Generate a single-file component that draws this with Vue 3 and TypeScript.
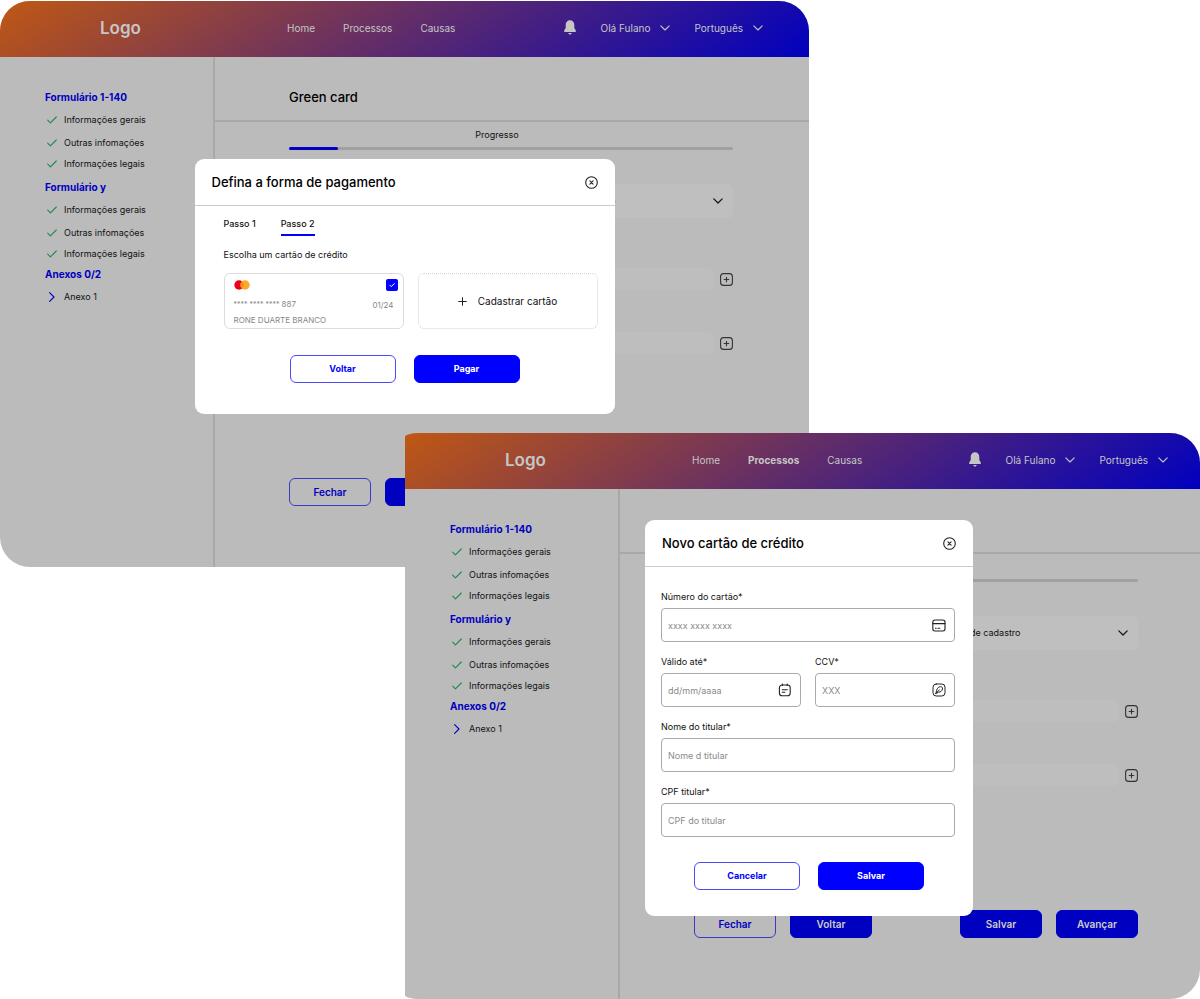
<script setup lang="ts">
import { ref } from 'vue'

interface AppWindow {
  id: string
  modal: 'payment' | 'card'
  active: string
  title: string
  progress: string
}

interface MenuGroup {
  title: string
  done: boolean
  items: string[]
}

const windows: AppWindow[] = [
  { id: 'back', modal: 'payment', active: '', title: 'Green card', progress: 'Progresso' },
  { id: 'front', modal: 'card', active: 'Processos', title: '', progress: '' },
]

const navLinks: string[] = ['Home', 'Processos', 'Causas']
const userMenus: string[] = ['Olá Fulano', 'Português']

const groups: MenuGroup[] = [
  { title: 'Formulário 1-140', done: true, items: ['Informações gerais', 'Outras infomações', 'Informações legais'] },
  { title: 'Formulário y', done: true, items: ['Informações gerais', 'Outras infomações', 'Informações legais'] },
  { title: 'Anexos 0/2', done: false, items: ['Anexo 1'] },
]

const steps: string[] = ['Passo 1', 'Passo 2']
const currentStep = ref<string>('Passo 2')
const savedCardSelected = ref<boolean>(true)

const fields = [
  { id: 'number', label: 'Número do cartão*', placeholder: 'xxxx xxxx xxxx', half: false },
  { id: 'expiry', label: 'Válido até*', placeholder: 'dd/mm/aaaa', half: true },
  { id: 'ccv', label: 'CCV*', placeholder: 'XXX', half: true },
  { id: 'holder', label: 'Nome do titular*', placeholder: 'Nome d titular', half: false },
  { id: 'cpf', label: 'CPF titular*', placeholder: 'CPF do titular', half: false },
]
</script>

<template>
  <div class="stage">
    <section v-for="win in windows" :key="win.id" class="window" :class="win.id">
      <div class="app">
        <header class="topbar">
          <a class="logo" href="#">Logo</a>
          <nav class="nav">
            <a v-for="link in navLinks" :key="link" href="#" :class="{ current: link === win.active }">{{ link }}</a>
          </nav>
          <div class="account">
            <button type="button" class="bell" aria-label="Notificações">
              <svg width="12" height="15" viewBox="0 0 12 15">
                <path d="M6 0.3C3.300 0.300 1.700 2.400 1.700 5v3L0.300 10.300c-.5.9-.1 1.700.9 1.700h9.600c1 0 1.400-.8.9-1.700L10.300 8V5C10.300 2.400 8.700.300 6 .3z" fill="currentColor" />
                <path d="M4.200 12.900h3.600c-.2.900-.9 1.500-1.800 1.500S4.400 13.800 4.200 12.900z" fill="currentColor" />
              </svg>
            </button>
            <button v-for="menu in userMenus" :key="menu" type="button" class="drop">
              <span>{{ menu }}</span>
              <svg width="10" height="6" viewBox="0 0 10 6">
                <path d="M0.800 0.800L5 5l4.200-4.200" fill="none" stroke="currentColor" stroke-width="1.100" stroke-linecap="round" stroke-linejoin="round" />
              </svg>
            </button>
          </div>
        </header>

        <div class="body">
          <aside class="sidebar">
            <div v-for="group in groups" :key="group.title" class="group">
              <h3>{{ group.title }}</h3>
              <ul>
                <li v-for="item in group.items" :key="item">
                  <svg v-if="group.done" width="10" height="8" viewBox="0 0 10 8">
                    <path d="M0.700 4.200L3.400 6.900 9.300 1" fill="none" stroke="#1d8a4e" stroke-width="1.100" stroke-linecap="round" stroke-linejoin="round" />
                  </svg>
                  <svg v-else width="10" height="10" viewBox="0 0 10 10">
                    <path d="M2.600 0.600L7 5 2.600 9.400" fill="none" stroke="#0000c0" stroke-width="1.100" stroke-linecap="round" stroke-linejoin="round" />
                  </svg>
                  <span>{{ item }}</span>
                </li>
              </ul>
            </div>
          </aside>

          <main class="main">
            <div class="titlebar"><h1 v-if="win.title">{{ win.title }}</h1></div>
            <div class="content">
              <p class="progress-label">{{ win.progress }}</p>
              <div class="progress" role="progressbar" aria-valuenow="11" aria-valuemin="0" aria-valuemax="100" aria-label="Progresso">
                <div class="progress-fill"></div>
              </div>
              <div class="picker">
                <select aria-label="Cadastro"><option>de cadastro</option></select>
                <svg width="10" height="6" viewBox="0 0 10 6">
                  <path d="M0.800 0.800L5 5l4.200-4.200" fill="none" stroke="#111" stroke-width="1.200" stroke-linecap="round" stroke-linejoin="round" />
                </svg>
              </div>
              <div v-for="n in 2" :key="n" class="adder">
                <input type="text" :aria-label="'Campo ' + n" />
                <button type="button" aria-label="Adicionar">
                  <svg width="13" height="13" viewBox="0 0 13 13" fill="none" stroke="#333" stroke-linecap="round">
                    <rect x="0.600" y="0.600" width="11.800" height="11.800" rx="3" stroke-width="1.100" />
                    <path d="M6.500 4.200v4.600M4.200 6.500h4.600" stroke-width="1.100" />
                  </svg>
                </button>
              </div>
              <div class="actions">
                <button type="button" class="btn outline">Fechar</button>
                <button type="button" class="btn">Voltar</button>
                <button type="button" class="btn push">Salvar</button>
                <button type="button" class="btn">Avançar</button>
              </div>
            </div>
          </main>
        </div>
      </div>

      <div class="overlay">
        <div class="modal" :class="win.modal" role="dialog" :aria-labelledby="win.id + '-title'">
          <div class="modal-head">
            <h2 :id="win.id + '-title'">{{ win.modal === 'payment' ? 'Defina a forma de pagamento' : 'Novo cartão de crédito' }}</h2>
            <button type="button" aria-label="Fechar janela">
              <svg width="13" height="13" viewBox="0 0 13 13" fill="none" stroke="#222" stroke-linecap="round">
                <circle cx="6.500" cy="6.500" r="5.800" stroke-width="1.100" />
                <path d="M4.900 4.900l3.200 3.200M8.100 4.900l-3.200 3.200" stroke-width="1.100" />
              </svg>
            </button>
          </div>

          <div v-if="win.modal === 'payment'" class="modal-body">
            <div class="tabs" role="tablist">
              <button
                v-for="step in steps"
                :key="step"
                type="button"
                role="tab"
                :aria-selected="step === currentStep"
                :class="{ selected: step === currentStep }"
                @click="currentStep = step"
              >{{ step }}</button>
            </div>
            <p class="hint">Escolha um cartão de crédito</p>
            <div class="cards">
              <label class="saved">
                <span class="row">
                  <svg width="16" height="10" viewBox="0 0 16 10">
                    <circle cx="5" cy="5" r="4.700" fill="#eb001b" />
                    <circle cx="11" cy="5" r="4.700" fill="#fca828" />
                    <path d="M8 1.400a4.700 4.700 0 0 1 0 7.200a4.700 4.700 0 0 1 0-7.200z" fill="#f58a1c" />
                  </svg>
                  <span class="tick">
                    <input v-model="savedCardSelected" type="checkbox" />
                    <svg v-if="savedCardSelected" width="12" height="12" viewBox="0 0 12 12">
                      <path d="M3.800 6.100l1.500 1.500 3-3" fill="none" stroke="#fff" stroke-width="1" stroke-linecap="round" stroke-linejoin="round" />
                    </svg>
                  </span>
                </span>
                <span class="row numbers">
                  <span><span class="mask">**** **** **** </span>887</span>
                  <span>01/24</span>
                </span>
                <span class="holder">RONE DUARTE BRANCO</span>
              </label>
              <button type="button" class="new-card">
                <svg width="9" height="9" viewBox="0 0 9 9">
                  <path d="M4.500 0.700v7.600M0.700 4.500h7.600" stroke="#222" stroke-width="1" stroke-linecap="round" />
                </svg>
                <span>Cadastrar cartão</span>
              </button>
            </div>
            <div class="modal-actions">
              <button type="button" class="btn bright outline">Voltar</button>
              <button type="button" class="btn bright">Pagar</button>
            </div>
          </div>

          <form v-else class="modal-body" @submit.prevent>
            <div class="fields">
              <div v-for="field in fields" :key="field.id" class="field" :class="{ half: field.half }">
                <label :for="field.id">{{ field.label }}</label>
                <div class="control">
                  <input :id="field.id" type="text" :placeholder="field.placeholder" />
                  <svg v-if="field.id === 'number'" width="14" height="13" viewBox="0 0 14 13" fill="none" stroke="#222" stroke-width="1.100" stroke-linecap="round">
                    <rect x="0.800" y="1" width="12.200" height="11" rx="2.200" />
                    <path d="M0.800 4.600h12.200" />
                    <path d="M3.400 9.200h0.800M6 9.200h1.800" />
                  </svg>
                  <svg v-if="field.id === 'expiry'" width="14" height="14" viewBox="0 0 14 14" fill="none" stroke="#222" stroke-width="1.100" stroke-linecap="round">
                    <rect x="1.400" y="2" width="10.800" height="10.800" rx="2.800" />
                    <path d="M4.400 1.100v1.400M9.200 1.100v1.400" />
                    <path d="M4.300 6.800h5M4.300 9.300h2.600" />
                  </svg>
                  <svg v-if="field.id === 'ccv'" width="14" height="14" viewBox="0 0 14 14" fill="none" stroke="#222" stroke-width="1" stroke-linecap="round" stroke-linejoin="round">
                    <rect x="1" y="1" width="12" height="12" rx="3.200" />
                    <path d="M3.900 10.400L4.700 7.200C5.300 5 6.700 3.700 8.500 3.700c1.500 0 2.300 1 2 2.300C10.200 7.800 8.600 9.100 6.600 9.200L3.900 10.400z" />
                    <path d="M4.100 10.200L7.400 6.800" />
                  </svg>
                </div>
              </div>
            </div>
            <div class="modal-actions">
              <button type="button" class="btn bright outline">Cancelar</button>
              <button type="submit" class="btn bright">Salvar</button>
            </div>
          </form>
        </div>
      </div>
    </section>
  </div>
</template>

<style>
body {
  margin: 0;
  background: #fff;
}
</style>

<style scoped>
* {
  box-sizing: border-box;
}

.stage {
  display: grid;
  grid-template-columns: 405fr 404fr 391fr;
  align-items: start;
  font-family: Inter, "Liberation Sans", sans-serif;
  font-size: 9px;
  line-height: 12px;
  color: #111;
}

h1,
h2,
h3,
p,
ul {
  margin: 0;
  padding: 0;
}

ul {
  list-style: none;
}

a {
  color: inherit;
  text-decoration: none;
}

button,
input,
select {
  margin: 0;
  padding: 0;
  border: 0;
  background: none;
  color: inherit;
  font: inherit;
}

button {
  cursor: pointer;
}

svg {
  display: block;
  flex: none;
}

/* Two application windows, the second overlapping the first */
.window {
  display: grid;
  grid-row: 1;
  overflow: hidden;
  background: #bbb;
}

.back {
  --edge: 0px;
  grid-column: 1 / 3;
  margin-top: 1px;
  border-radius: 30px;
}

.front {
  --edge: 14px;
  grid-column: 2 / 4;
  margin-top: 433px;
  border-radius: 14px 30px 30px 14px / 4px 30px 30px 4px;
}

.app,
.overlay {
  grid-area: 1 / 1;
  min-width: 0;
}

.app {
  display: flex;
  flex-direction: column;
}

.topbar {
  display: flex;
  align-items: center;
  height: 56px;
  padding: 0 calc(46px - var(--edge)) 3px 0;
  background: linear-gradient(147deg, #c05814, #0000bf);
  color: #c6c6c6;
  font-size: 10px;
  line-height: 14px;
}

.logo {
  width: 287px;
  padding-left: 100px;
  font-size: 17px;
  font-weight: 600;
  line-height: 20px;
}

.nav {
  display: flex;
  gap: 28px;
}

.nav .current {
  font-weight: 700;
}

.account {
  display: flex;
  align-items: center;
  gap: 24px;
  margin-left: auto;
}

.drop {
  display: flex;
  align-items: center;
  gap: 10px;
}

.body {
  display: flex;
  flex: 1;
}

.sidebar {
  width: 215px;
  padding: 29px 0 0 45px;
  border-right: 2px solid #a8a8a8;
}

.group:nth-child(2) {
  margin-top: 3px;
}

.group h3 {
  color: #0000c0;
  font-size: 10px;
  font-weight: 700;
  line-height: 23px;
}

.group ul {
  display: grid;
  grid-template-rows: 22px 23px 19px;
}

.group:last-child ul {
  grid-template-rows: 22px;
}

.group li {
  display: flex;
  align-items: center;
  gap: 7px;
  padding-left: 2px;
}

.main {
  display: flex;
  flex: 1;
  flex-direction: column;
  min-width: 0;
}

.titlebar {
  display: flex;
  align-items: center;
  height: 65px;
  padding: 17px 74px 0;
  border-bottom: 2px solid #a8a8a8;
}

.titlebar h1,
.modal-head h2 {
  color: #000;
  font-size: 13px;
  font-weight: 500;
  line-height: 18px;
}

.content {
  display: flex;
  flex-direction: column;
  padding: 7px calc(76px - var(--edge)) 61px 74px;
}

.progress-label {
  min-height: 12px;
  padding-right: 28px;
  text-align: center;
}

.progress {
  height: 3px;
  margin-top: 6px;
  border-radius: 2px;
  background: #a0a0a0;
}

.progress-fill {
  width: 11%;
  height: 3px;
  border-radius: 2px;
  background: #0000c0;
}

.picker {
  display: grid;
  align-items: center;
  margin-top: 34px;
}

.picker select,
.picker svg {
  grid-area: 1 / 1;
}

.picker select {
  width: 100%;
  height: 34px;
  padding-left: 276px;
  border-radius: 5px;
  background: #bfbfbf;
  appearance: none;
}

.picker svg {
  justify-self: end;
  margin-right: 10px;
  pointer-events: none;
}

.adder {
  display: flex;
  align-items: center;
  gap: 6px;
  margin-top: 42px;
}

.picker + .adder {
  margin-top: 50px;
}

.adder input {
  flex: 1;
  height: 22px;
  border-radius: 5px;
  background: #bebebe;
}

.actions {
  display: flex;
  gap: 14px;
  margin-top: 124px;
}

.push {
  margin-left: auto;
}

.btn {
  width: 82px;
  height: 28px;
  border: 1px solid #0000c0;
  border-radius: 6px;
  background: #0000c0;
  color: #ccc;
  font-size: 10px;
  font-weight: 600;
  line-height: 14px;
}

.btn.outline {
  border-color: #3a3ac4;
  background: transparent;
  color: #0000c0;
}

.btn.bright {
  width: 106px;
  border-color: #00f;
  background: #00f;
  color: #fff;
  font-size: 9px;
  font-weight: 700;
}

.btn.bright.outline {
  border-color: #4a4af8;
  background: #fff;
  color: #00f;
}

.overlay {
  display: flex;
  align-items: flex-start;
  justify-content: center;
  padding-top: 158px;
}

.front .overlay {
  padding: 87px 0 0 13px;
}

.modal {
  width: 420px;
  border-radius: 9px;
  background: #fff;
}

.modal.card {
  width: 328px;
}

.modal-head {
  display: flex;
  align-items: center;
  justify-content: space-between;
  height: 47px;
  padding: 0 17px;
  border-bottom: 1px solid #ccc;
}

.payment .modal-body {
  padding: 12px 17px 31px 29px;
}

.tabs {
  display: flex;
  gap: 25px;
}

.tabs button {
  padding-bottom: 4px;
  border-bottom: 2px solid transparent;
  font-weight: 500;
  line-height: 12px;
}

.tabs .selected {
  border-color: #00f;
}

.hint {
  margin-top: 13px;
}

.cards {
  display: grid;
  grid-template-columns: 1fr 1fr;
  gap: 14px;
  margin-top: 12px;
}

.saved {
  display: flex;
  flex-direction: column;
  height: 56px;
  padding: 5px 5px 0 9px;
  border: 1px solid #ddd;
  border-radius: 6px;
  color: #888;
  font-size: 8px;
  line-height: 10px;
}

.row {
  display: flex;
  align-items: center;
  justify-content: space-between;
}

.numbers {
  padding: 8px 4px 5px 0;
}

.mask {
  font-size: 7px;
}

.tick {
  display: grid;
}

.tick input,
.tick svg {
  grid-area: 1 / 1;
}

.tick input {
  width: 12px;
  height: 12px;
  border-radius: 2px;
  background: #fff;
  appearance: none;
}

.tick input:checked {
  background: #00f;
}

.tick svg {
  pointer-events: none;
}

.new-card {
  display: flex;
  align-items: center;
  justify-content: center;
  gap: 11px;
  height: 56px;
  border: 1px dotted #d4d4d4;
  border-radius: 6px;
  font-size: 10px;
}

.modal-actions {
  display: flex;
  justify-content: center;
  gap: 18px;
}

.payment .modal-actions {
  margin: 26px 12px 0 0;
}

.card .modal-body {
  padding: 24px 18px 26px 16px;
}

.card .modal-actions {
  margin-top: 25px;
  padding-left: 2px;
}

.fields {
  display: grid;
  grid-template-columns: 1fr 1fr;
  gap: 14px;
}

.field {
  display: flex;
  flex-direction: column;
  gap: 5px;
  grid-column: span 2;
}

.field.half {
  grid-column: span 1;
}

.field label {
  line-height: 12px;
}

.control {
  display: grid;
  align-items: center;
}

.control input,
.control svg {
  grid-area: 1 / 1;
}

.control input {
  width: 100%;
  height: 34px;
  padding: 0 30px 0 6px;
  border: 1px solid #aaa;
  border-radius: 4px;
}

.control input::placeholder {
  color: #8a8a8a;
  opacity: 1;
}

.control svg {
  justify-self: end;
  margin-right: 9px;
  pointer-events: none;
}
</style>
